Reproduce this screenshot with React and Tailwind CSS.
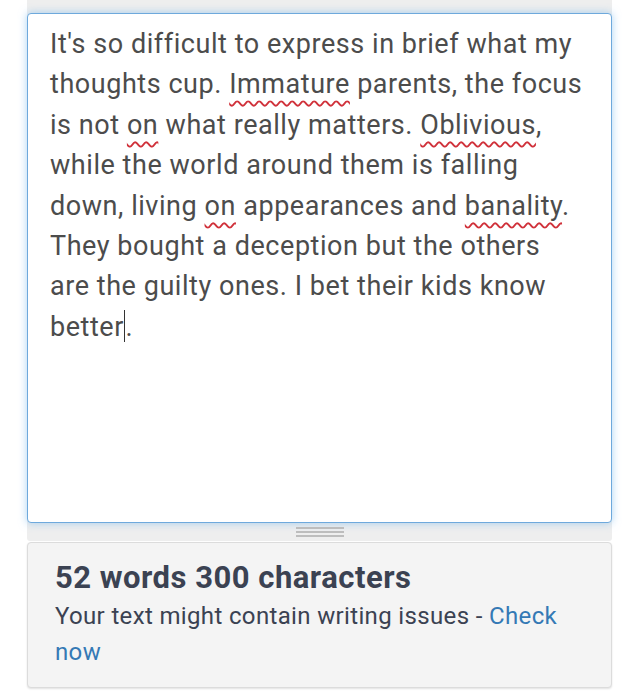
import React from "react";

const W = ({ children }) => (
  <span className="underline decoration-wavy decoration-[#d0313a] decoration-[1.5px] underline-offset-[7px]">
    {children}
  </span>
);

export default function App() {
  return (
    <div
      className="min-h-[691px] bg-white pl-[27px] pr-[28px]"
      style={{ fontFamily: "Roboto, 'Liberation Sans', sans-serif" }}
    >
      <div className="bg-[#eeeeee] pt-[13px] rounded-b-[3px]">
        <div className="h-[510px] bg-white border border-[#6ea9dc] rounded-[4px] shadow-[0_0_8px_rgba(102,175,233,0.55)] pl-[22px] pr-[6px] pt-[10px] text-[27px] leading-[40.4px] text-[#4c4c4c] tracking-[0.55px]">
          <div>It's so difficult to express in brief what my</div>
          <div>
            thoughts cup. <W>Immature</W> parents, the focus
          </div>
          <div>
            is not <W>on</W> what really matters. <W>Oblivious</W>,
          </div>
          <div>while the world around them is falling</div>
          <div>
            down, living <W>on</W> appearances and <W>banality</W>.
          </div>
          <div>They bought a deception but the others</div>
          <div>are the guilty ones. I bet their kids know</div>
          <div>
            better
            <span className="inline-block w-[1.5px] h-[32px] bg-[#333] align-[-6px]" />
            .
          </div>
        </div>
        <div className="h-[18px] flex items-center justify-center">
          <div className="w-[48px] flex flex-col gap-[2px]">
            <div className="h-[2px] bg-[#bdbdbd]" />
            <div className="h-[2px] bg-[#bdbdbd]" />
            <div className="h-[2px] bg-[#bdbdbd]" />
          </div>
        </div>
      </div>
      <div className="mt-[1px] bg-[#f4f4f4] border border-[#dcdcdc] rounded-[4px] shadow-[0_1px_2px_rgba(0,0,0,0.12)] pl-[27px] pr-[30px] pt-[15px] h-[146px]">
        <div className="text-[31px] leading-[40px] font-bold text-[#3b4252] tracking-[0.5px]">
          52 words 300 characters
        </div>
        <div className="text-[24px] leading-[36px] text-[#3b4252] tracking-[0.35px]">
          Your text might contain writing issues -{" "}
          <span className="text-[#3479b5]">Check now</span>
        </div>
      </div>
    </div>
  );
}
